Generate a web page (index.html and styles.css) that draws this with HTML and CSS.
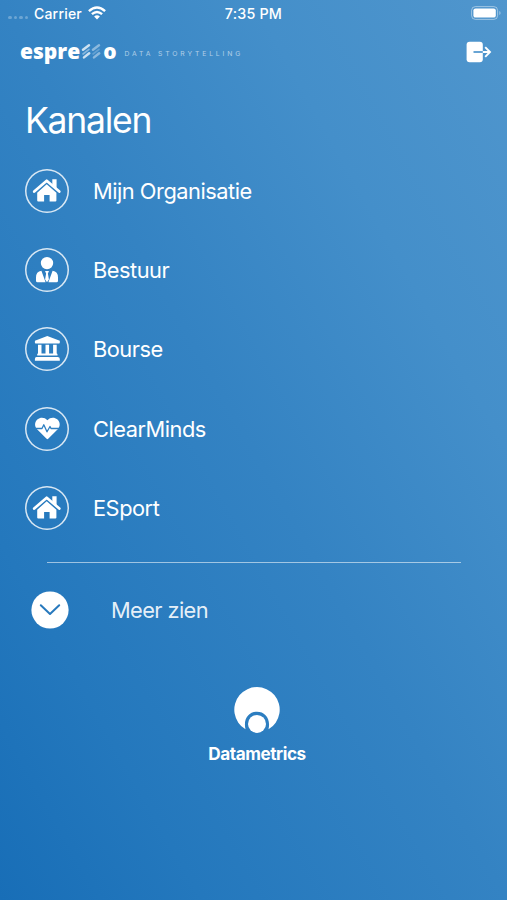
FILE: index.html
```html
<!DOCTYPE html>
<html lang="nl">
<head>
<meta charset="utf-8">
<title>Kanalen</title>
<link rel="stylesheet" href="styles.css">
</head>
<body>
<svg class="defs" width="0" height="0">
  <symbol id="home" viewBox="0 0 44 44">
    <path d="M9.200 22.600 21.700 11.700 34.300 22.600" fill="none" stroke="currentColor" stroke-width="2.700" stroke-linecap="round" stroke-linejoin="round"/>
    <path d="M27.300 10.200h4.300v9l-4.300-3.900zM21.700 15.300 31.400 23.800v7.800q0 1-1 1h-5.800v-6.700h-5.500v6.700h-5.900q-1 0-1-1V23.800z" fill="currentColor"/>
  </symbol>
  <symbol id="person" viewBox="0 0 44 44">
    <circle cx="22" cy="15.100" r="6.200" fill="currentColor"/>
    <path d="M16.400 22.700 20.600 34.300H12.500Q11 34.300 11 32.800V29.500Q11 23.300 16.400 22.700ZM27.600 22.700 23.400 34.300H31.500Q33 34.300 33 32.800V29.500Q33 23.300 27.600 22.700ZM20 23h4l-1.100 2.400 1 6L22 34.200l-1.900-2.800 1-6z" fill="currentColor"/>
  </symbol>
  <symbol id="bank" viewBox="0 0 44 44">
    <path d="M22.300 9.100 34.800 13.700v2.100q0 .7-.8.7H10.700q-.8 0-.8-.7V13.700zM13 17.700h3.500v8.800h4V17.700h3.600v8.800h4V17.700h3.600v8.800q.8.200.8 1v1H12.200v-1q0-.8.8-1zM11.500 30.100h21.100q2.200.2 2.200 2v1.600H9.900v-1.600q0-1.800 1.600-2z" fill="currentColor"/>
  </symbol>
  <symbol id="heart" viewBox="0 0 44 44">
    <path d="M22.400 13.200C25 10.200 29.500 10 32.200 12.300 35.300 15 35.500 19 33 22L23.200 31.800Q22.400 32.500 21.600 31.800L11.800 22C9.300 19 9.500 15 12.600 12.300 15.300 10 19.800 10.200 22.400 13.200Z" fill="currentColor"/>
    <path d="M9.500 21.500H17l1.800-3.700 3.200 7 3-5.300 1 2H35" fill="none" stroke="#2d7fc1" stroke-width="1.300" stroke-linejoin="round"/>
  </symbol>
</svg>
<div class="screen">
  <header class="status">
    <div class="status-left">
      <span class="signal"><i></i><i></i><i></i><i></i></span>
      <span>Carrier</span>
      <svg class="wifi" width="18" height="14" viewBox="0 0 18 14">
        <g fill="none" stroke="#fff" stroke-width="2.400"><path d="M.9 5.200Q9-2.200 17.100 5.200"/><path d="M3.900 8.200Q9 3.600 14.100 8.200"/></g>
        <path d="M6.100 10.500Q9 8 11.900 10.500L9 13.600z" fill="#fff"/>
      </svg>
    </div>
    <div class="clock">7:35 PM</div>
    <svg class="battery" width="31" height="14" viewBox="0 0 31 14">
      <rect x=".6" y=".6" width="26" height="12.800" rx="3.800" fill="none" stroke="#fff" stroke-opacity=".45"/>
      <rect x="2.400" y="2.400" width="22.400" height="9.200" rx="2.200" fill="#fff"/>
      <path d="M28.300 5v4q1.300-.7 1.300-2t-1.300-2z" fill="#fff" fill-opacity=".45"/>
    </svg>
  </header>
  <div class="brand">
    <div class="logo"><span>espre</span><svg width="23" height="18" viewBox="0 0 23 18">
      <g fill="none" stroke="#fff" stroke-width="2.500" stroke-linecap="round"><path d="M3 7.800 9 3.200M4 15.400 9.200 11.200" opacity=".75"/><path d="M3 12 9 7.300" opacity=".4" stroke-width="1.600"/><path d="M13 7.800 19 3.200M14 15.400 19.200 11.200" opacity=".42"/><path d="M13 12 19 7.300" opacity=".22" stroke-width="1.600"/></g>
    </svg><span>o</span></div>
    <div class="tagline">DATA STORYTELLING</div>
    <svg class="logout" width="26" height="22" viewBox="0 0 26 22">
      <rect x=".6" y=".8" width="16.200" height="20.400" rx="3" fill="#fff"/>
      <path d="M7.500 11H17" stroke="#4d94cd" stroke-width="1.700"/>
      <path d="M16.800 11H24M19.200 6.200 24 11 19.200 15.800" fill="none" stroke="#fff" stroke-width="1.900"/>
    </svg>
  </div>
  <main>
    <h1>Kanalen</h1>
    <ul class="channels">
      <li><svg class="ring"><use href="#home"/></svg><span>Mijn Organisatie</span></li>
      <li><svg class="ring"><use href="#person"/></svg><span>Bestuur</span></li>
      <li><svg class="ring"><use href="#bank"/></svg><span>Bourse</span></li>
      <li><svg class="ring"><use href="#heart"/></svg><span>ClearMinds</span></li>
      <li><svg class="ring"><use href="#home"/></svg><span>ESport</span></li>
    </ul>
    <hr>
    <div class="more">
      <svg width="38" height="38" viewBox="0 0 38 38"><circle cx="19" cy="19" r="18.600" fill="#fff"/><path d="M9.800 14.200 19 23 28.200 14.200" fill="none" stroke="#2879bd" stroke-width="2" stroke-linecap="round" stroke-linejoin="round"/></svg>
      <span>Meer zien</span>
    </div>
  </main>
  <footer>
    <svg width="46" height="47" viewBox="0 0 46 47">
      <path d="M11.500 42.300A22.700 22.700 0 1 1 34.500 42.300C37 31.500 31 24.800 23 24.800S9 31.500 11.500 42.300Z" fill="#fff"/>
      <circle cx="23" cy="36.900" r="9" fill="#fff"/>
    </svg>
    <div class="wordmark">Datametrics</div>
  </footer>
</div>
</body>
</html>
```
FILE: styles.css
```css
* { box-sizing: border-box; }
body { margin: 0; font-family: Inter, "Liberation Sans", sans-serif; color: #fff; }
.defs { display: block; position: absolute; }
.screen {
  width: 507px; height: 900px; overflow: hidden;
  background: linear-gradient(to top right, #186eb7 0%, #2478bd 20%, #3483c3 50%, #448fca 75%, #5096cd 100%);
}
.status { display: grid; grid-template-columns: 1fr auto 1fr; align-items: center; height: 26px; padding: 0 5px 0 8px; font-size: 14px; font-weight: 500; letter-spacing: .2px; }
.status-left { display: flex; align-items: center; gap: 6px; }
.signal { display: flex; gap: 2px; width: 20px; padding-top: 9px; }
.signal i { width: 4px; height: 3px; border-radius: 2px; background: rgba(255,255,255,.28); }
.clock { font-size: 14.300px; margin-right: 3px; }
.battery { justify-self: end; }
.brand { display: flex; align-items: center; height: 52px; padding: 0 15px 0 20px; }
.logo { display: flex; align-items: center; margin-top: -3px; font: 800 21px/26px "Open Sans", sans-serif; }
.tagline { margin: 3px 0 0 8px; font-size: 6.800px; letter-spacing: 2.850px; color: rgba(255,255,255,.6); white-space: nowrap; }
.logout { margin-left: auto; }
main { padding: 0 25px; }
h1 { margin: 21px 0 0; font-size: 35.500px; line-height: 44px; font-weight: 400; letter-spacing: -1.250px; }
.channels { list-style: none; margin: 25.500px 0 0; padding: 0; display: grid; grid-auto-rows: 79.400px; font-size: 21.800px; letter-spacing: -.480px; }
.channels li { display: flex; align-items: flex-start; gap: 24px; line-height: 44px; font-weight: 400; }
.ring { width: 44px; height: 44px; border-radius: 50%; box-shadow: inset 0 0 0 1.500px rgba(255,255,255,.82); }
hr { margin: -3.500px 21px 0 22px; border: 0; height: 1px; background: rgba(255,255,255,.55); }
.more { display: flex; align-items: center; gap: 42px; margin: 28px 0 0 6px; font-size: 21.800px; font-weight: 400; letter-spacing: -.600px; color: rgba(255,255,255,.9); }
footer { display: flex; flex-direction: column; align-items: center; margin-top: 58px; padding-left: 7px; }
.wordmark { margin-top: 8px; font-size: 17.200px; line-height: 24px; font-weight: 700; letter-spacing: -.450px; }
```
